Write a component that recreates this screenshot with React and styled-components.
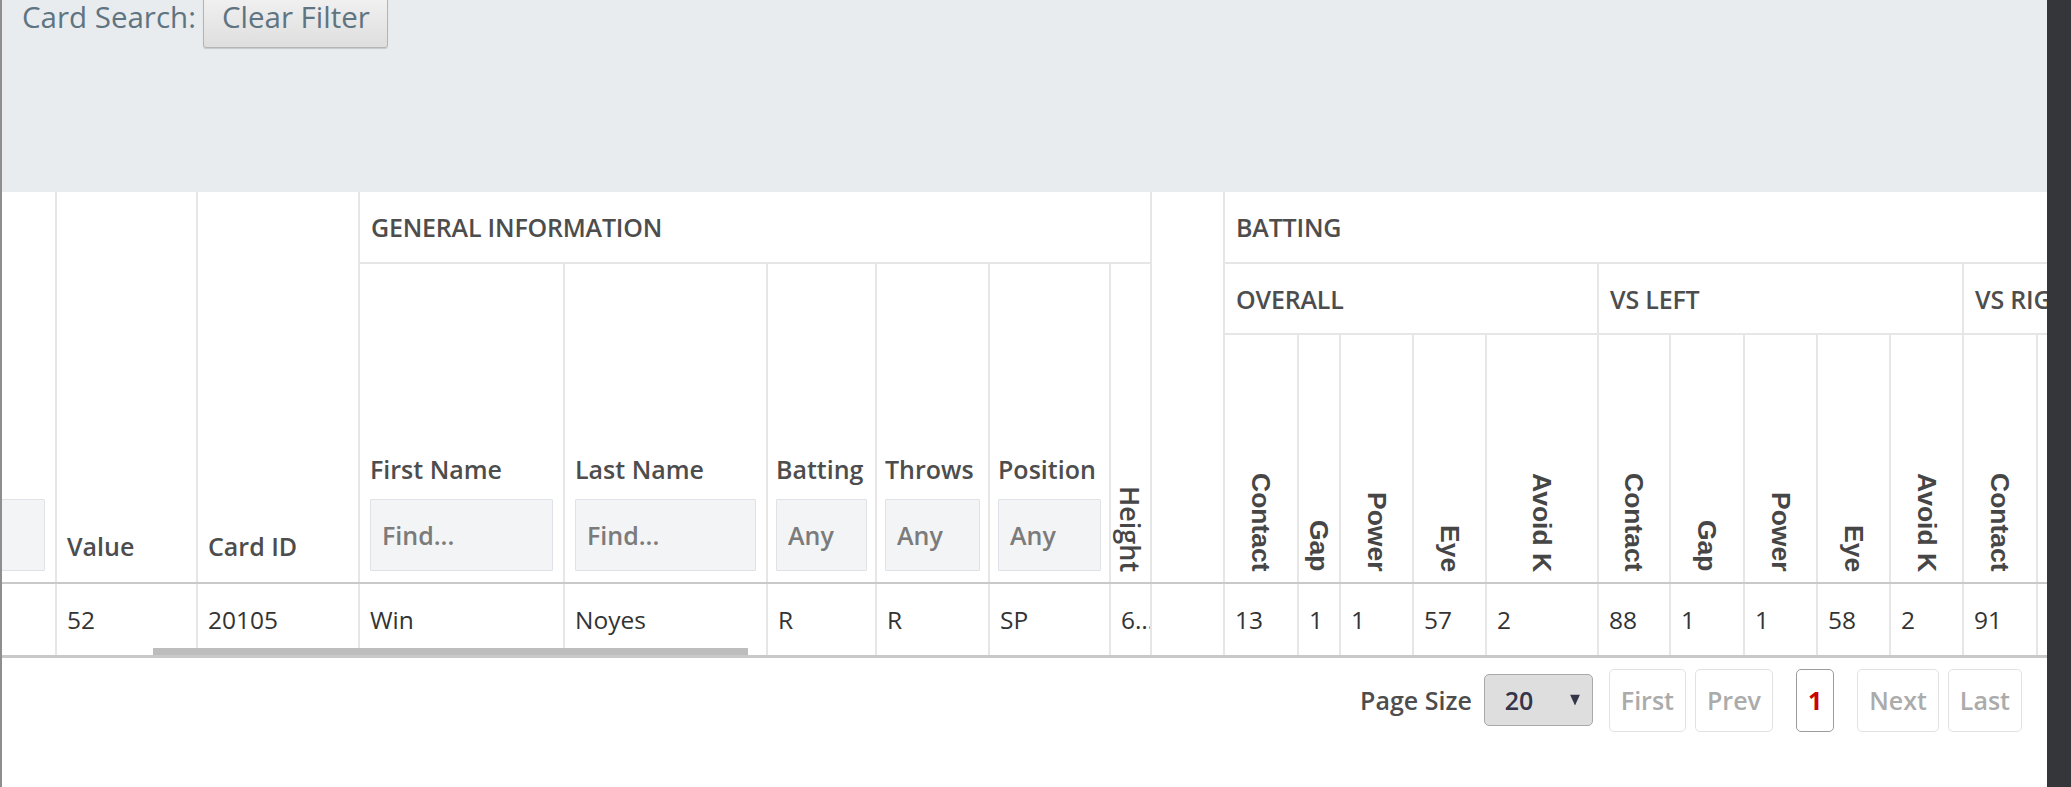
import React, { useLayoutEffect, useRef } from 'react';
import styled, { createGlobalStyle } from 'styled-components';

const GlobalStyle = createGlobalStyle`
  html, body { margin: 0; padding: 0; background: #fff; }
  body { font-family: "Open Sans", "Liberation Sans", sans-serif; }
  * { box-sizing: border-box; }
`;

// column widths, first column is mostly scrolled out of view
const colWidths = [140, 141, 162, 205, 203, 109, 113, 121, 41, 73,
  74, 42, 73, 73, 112,
  72, 74, 73, 73, 73,
  74, 74, 73, 73, 73];

const ratings = ['Contact', 'Gap', 'Power', 'Eye', 'Avoid K'];
const splits = ['OVERALL', 'VS LEFT', 'VS RIGHT'];

const card = {
  value: 52,
  cardId: 20105,
  first: 'Win',
  last: 'Noyes',
  bats: 'R',
  throws: 'R',
  pos: 'SP',
  height: `6'1"`,
  batting: [[13, 1, 1, 57, 2], [88, 1, 1, 58, 2], [91, 1, 1, 56, 2]],
};

const App = () => {
  const scrollRef = useRef(null);

  useLayoutEffect(() => {
    if (scrollRef.current) scrollRef.current.scrollLeft = 87;
  }, []);

  return (
    <Page>
      <GlobalStyle />
      <Main>
        <FilterPanel>
          <FilterRow>
            <FilterLabel>Card Search:</FilterLabel>
            <ClearButton>Clear Filter</ClearButton>
          </FilterRow>
        </FilterPanel>

        <TableFrame>
          <TableScroll ref={scrollRef}>
            <Grid>
              <colgroup>
                {colWidths.map((w, i) => <col key={i} style={{ width: w }} />)}
              </colgroup>
              <thead>
                <tr>
                  <LabelTh rowSpan={3}>
                    <FilterInput aria-label="Title filter" />
                  </LabelTh>
                  <LabelTh rowSpan={3}><HeadLabel $solo>Value</HeadLabel></LabelTh>
                  <LabelTh rowSpan={3}><HeadLabel $solo>Card ID</HeadLabel></LabelTh>
                  <GroupTh colSpan={6}>GENERAL INFORMATION</GroupTh>
                  <LabelTh rowSpan={3} />
                  <GroupTh colSpan={15}>BATTING</GroupTh>
                </tr>
                <tr>
                  <LabelTh rowSpan={2}>
                    <HeadLabel>First Name</HeadLabel>
                    <FilterInput placeholder="Find..." />
                  </LabelTh>
                  <LabelTh rowSpan={2}>
                    <HeadLabel>Last Name</HeadLabel>
                    <FilterInput placeholder="Find..." />
                  </LabelTh>
                  <LabelTh rowSpan={2} $tight>
                    <HeadLabel>Batting</HeadLabel>
                    <FilterInput placeholder="Any" />
                  </LabelTh>
                  <LabelTh rowSpan={2} $tight>
                    <HeadLabel>Throws</HeadLabel>
                    <FilterInput placeholder="Any" />
                  </LabelTh>
                  <LabelTh rowSpan={2} $tight>
                    <HeadLabel>Position</HeadLabel>
                    <FilterInput placeholder="Any" />
                  </LabelTh>
                  <RotTh rowSpan={2}><VerticalText $plain>Height</VerticalText></RotTh>
                  {splits.map((s) => (
                    <GroupTh key={s} colSpan={5}>{s}</GroupTh>
                  ))}
                </tr>
                <tr>
                  {splits.map((s) => ratings.map((r) => (
                    <RotTh key={s + r}><VerticalText>{r}</VerticalText></RotTh>
                  )))}
                </tr>
              </thead>
              <tbody>
                <tr>
                  <Td />
                  <Td>{card.value}</Td>
                  <Td>{card.cardId}</Td>
                  <Td>{card.first}</Td>
                  <Td>{card.last}</Td>
                  <Td>{card.bats}</Td>
                  <Td>{card.throws}</Td>
                  <Td>{card.pos}</Td>
                  <Td $clip><Ellipsis>{card.height}</Ellipsis></Td>
                  <Td />
                  {card.batting.map((split, i) => split.map((v, j) => (
                    <Td key={`${i}-${j}`}>{v}</Td>
                  )))}
                </tr>
              </tbody>
            </Grid>
          </TableScroll>
          <ScrollThumb />
        </TableFrame>

        <Pager>
          <PagerLabel>Page Size</PagerLabel>
          <SelectWrap>
            <PageSelect defaultValue="20">
              <option>10</option>
              <option>20</option>
              <option>50</option>
            </PageSelect>
            <SelectArrow viewBox="0 0 10 11" width="10" height="11">
              <polygon points="0,0 10,0 5,11" />
            </SelectArrow>
          </SelectWrap>
          <PageButton disabled>First</PageButton>
          <PageButton disabled>Prev</PageButton>
          <PageNumbers>
            <PageButton $active>1</PageButton>
          </PageNumbers>
          <PageButton disabled>Next</PageButton>
          <PageButton disabled>Last</PageButton>
        </Pager>
      </Main>
      <ScrollTrack />
    </Page>
  );
};

export default App;

// Styles
const Page = styled.div`
  display: flex;
  width: 100%;
  height: 787px;
  overflow: hidden;
`

const Main = styled.div`
  flex: 1;
  min-width: 0;
  display: flex;
  flex-direction: column;
  border-left: 2px solid #8e8e8e;
  background: #fff;
`

const ScrollTrack = styled.div`
  width: 24px;
  flex-shrink: 0;
  background: #343639;
`

const FilterPanel = styled.div`
  height: 192px;
  flex-shrink: 0;
  background: #e8ecef;
  overflow: hidden;
`

const FilterRow = styled.div`
  display: flex;
  align-items: center;
  gap: 7px;
  height: 62px;
  margin-top: -14px;
  padding-left: 20px;
`

const FilterLabel = styled.span`
  font-size: 29.5px;
  line-height: 1;
  color: #5f7481;
`

const ClearButton = styled.button`
  height: 62px;
  padding: 0 17px 0 18px;
  font-family: "Open Sans", sans-serif;
  font-size: 29.5px;
  line-height: 1;
  color: #5f7481;
  background: linear-gradient(#f5f5f5, #dedede);
  border: 1px solid #b4b4b4;
  border-radius: 3px;
  box-shadow: 0 1px 1px rgba(0, 0, 0, 0.15);
`

const TableFrame = styled.div`
  position: relative;
  flex-shrink: 0;
`

const TableScroll = styled.div`
  width: 100%;
  overflow: hidden;
`

const Grid = styled.table`
  width: 2414px;
  table-layout: fixed;
  border-collapse: collapse;
  color: #4d4d4d;

  th, td {
    border-left: 2px solid #e6e6e6;
    border-right: 2px solid #e6e6e6;
  }

  thead th {
    border-bottom: 2px solid #e6e6e6;
  }

  thead tr:first-child th { height: 71px; }
  thead tr:nth-child(2) th { height: 71px; }
  thead tr:nth-child(3) th { height: 249px; border-bottom: 2px solid #c9c9c9; }
  thead th[rowspan] { border-bottom: 2px solid #c9c9c9; }

  tbody tr {
    height: 73px;
    border-bottom: 3px solid #c8c8c8;
  }
`

const GroupTh = styled.th`
  padding: 0 11px;
  text-align: left;
  vertical-align: middle;
  font-size: 25px;
  font-weight: 600;
  letter-spacing: -0.2px;
  white-space: nowrap;
  overflow: hidden;
`

const LabelTh = styled.th`
  padding: 0 ${(p) => (p.$tight ? '8px' : '10px')} 11px;
  text-align: left;
  vertical-align: bottom;
  font-weight: 600;
`

const HeadLabel = styled.div`
  font-size: 25px;
  line-height: 35px;
  white-space: nowrap;
  margin-bottom: ${(p) => (p.$solo ? '7px' : '12px')};
`

const FilterInput = styled.input`
  display: block;
  width: 100%;
  height: 72px;
  padding: 0 11px;
  background: #f3f4f6;
  border: 1px solid #dfe2e6;
  border-radius: 1px;
  font-family: "Open Sans", sans-serif;
  font-size: 25px;
  font-weight: 600;
  color: #333;

  &::placeholder {
    color: #7b7b7b;
  }
`

const RotTh = styled.th`
  padding: 0 0 10px;
  vertical-align: bottom;
  text-align: center;
`

const VerticalText = styled.span`
  display: block;
  width: fit-content;
  margin: 0 auto;
  writing-mode: vertical-rl;
  white-space: nowrap;
  line-height: 1.15;
  color: #464646;
  font-family: ${(p) => (p.$plain ? '"Open Sans", sans-serif' : '"Liberation Sans", Arial, sans-serif')};
  font-size: ${(p) => (p.$plain ? '27px' : '26.5px')};
  font-weight: ${(p) => (p.$plain ? 600 : 700)};
`

const Td = styled.td`
  padding: 0 ${(p) => (p.$clip ? '0' : '10px')} 0 10px;
  font-size: 24.5px;
  color: #333;
  white-space: nowrap;
  overflow: hidden;
`

const Ellipsis = styled.span`
  display: block;
  width: 36px;
  overflow: hidden;
  text-overflow: ellipsis;
  white-space: nowrap;
`

const ScrollThumb = styled.div`
  position: absolute;
  left: 151px;
  bottom: 3px;
  width: 595px;
  height: 7px;
  background: #bdbdbd;
`

const Pager = styled.div`
  display: flex;
  justify-content: flex-end;
  align-items: center;
  gap: 9px;
  padding: 11px 25px 0 0;
`

const PagerLabel = styled.span`
  margin-right: 3px;
  font-size: 25px;
  font-weight: 600;
  color: #4d4d4d;
`

const SelectWrap = styled.div`
  position: relative;
  margin-right: 7px;
`

const PageSelect = styled.select`
  appearance: none;
  width: 109px;
  height: 52px;
  padding: 0 0 0 20px;
  background: #dedede;
  border: 1px solid #a9a9a9;
  border-radius: 5px;
  font-family: "Open Sans", sans-serif;
  font-size: 25px;
  font-weight: 600;
  color: #34344a;
`

const SelectArrow = styled.svg`
  position: absolute;
  right: 13px;
  top: 50%;
  transform: translateY(-50%);
  fill: #34344a;
  pointer-events: none;
`

const PageNumbers = styled.div`
  display: flex;
  margin: 0 14px;
`

const PageButton = styled.button`
  height: 63px;
  padding: 0 11px;
  background: #fff;
  border: 1px solid ${(p) => (p.$active ? '#9c9c9c' : '#e2e2e2')};
  border-radius: 5px;
  font-family: "Open Sans", sans-serif;
  font-size: 25px;
  font-weight: ${(p) => (p.$active ? 700 : 600)};
  color: ${(p) => (p.$active ? '#cc0000' : '#ababab')};
`
